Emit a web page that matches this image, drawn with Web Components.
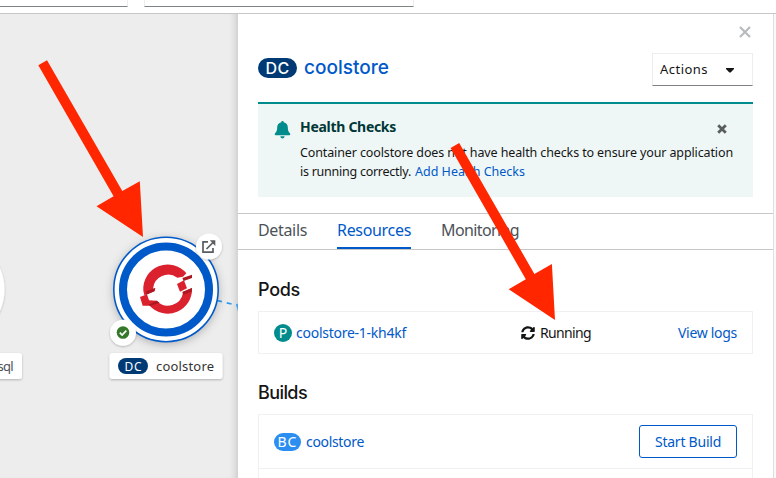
<!DOCTYPE html>
<html lang="en"><head><meta charset="utf-8"><title>coolstore</title>
<style>
html,body{margin:0;height:100%;overflow:hidden}
body{font-family:"Noto Sans","Liberation Sans",sans-serif;font-size:14px;color:#151515;background:#fff}
</style></head><body>
<console-app></console-app>
<script>
const define=(name,html,ready)=>customElements.define(name,class extends HTMLElement{
  connectedCallback(){
    if(this.shadowRoot)return;
    const t=document.createElement('template');t.innerHTML=html;
    this.attachShadow({mode:'open'}).append(t.content.cloneNode(true));
    if(ready)ready.call(this,this.shadowRoot);
  }
});

/* Text run tracked to a given width in pixels. */
define('fit-text',`<style>:host{display:inline-block;white-space:nowrap}span{display:inline-block}</style><span><slot></slot></span>`,function(r){
  const s=r.querySelector('span'),w=+this.getAttribute('w'),n=this.textContent.length;
  const d=(w-s.getBoundingClientRect().width)/n;
  s.style.letterSpacing=d+'px';this.style.width=w+'px';
});

define('kind-badge',`<style>:host{display:flex;align-items:center;justify-content:center;box-sizing:border-box;flex:none;color:#fff;background:var(--kind,#003a75);border-radius:20px;width:var(--w,18px);height:var(--h,18px);font-size:var(--fs,14px);line-height:1}</style><slot></slot>`);

define('top-bar',`<style>:host{display:flex;gap:16px;height:13px;border-bottom:1px solid #c7c7c7;background:#fff;flex:none}
i{height:6px;border-bottom:1px solid #808386;border-right:1px solid #ededed;width:127px}
.wide{width:268px;border-left:1px solid #ededed}</style><i></i><i class="wide"></i>`);

define('topology-view',`<style>:host{display:block;background:#ededed;width:238px;flex:none;box-shadow:inset -8px 0 8px -7px #0003}svg{display:block}text{font-family:"Noto Sans",sans-serif;font-size:13px}</style>
<svg width="238" height="464" viewBox="0 14 238 464">
<defs><filter id="s" x="-40%" y="-40%" width="180%" height="180%"><feDropShadow dx="0" dy="2" stdDeviation="5" flood-opacity=".28"/></filter>
<filter id="t" x="-30%" y="-30%" width="160%" height="180%"><feDropShadow dx="0" dy="1" stdDeviation="1.3" flood-opacity=".25"/></filter></defs>
<circle cx="-48.5" cy="289.5" r="53" fill="#fff" filter="url(#t)"/>
<rect x="-60" y="353" width="82" height="26" rx="3" fill="#fff" filter="url(#t)"/>
<text x="-2.5" y="371" textLength="16" fill="#4d5258">sql</text>
<path d="M217 300.500L238 305.500" stroke="#2b9af3" stroke-width="1.700" stroke-dasharray="5 5" fill="none"/>
<path d="M236 304.500l2-1v8z" fill="#4a9df0"/>
<circle cx="166" cy="289.500" r="52.500" fill="#fff" filter="url(#s)"/>
<circle cx="166" cy="289.500" r="52.200" fill="#fff" stroke="#0059c8" stroke-width="1.600"/>
<circle cx="166" cy="289.500" r="43" fill="#fff" stroke="#0059c8" stroke-width="8"/>
<g transform="translate(136 260) scale(.3333)"><g fill="#db212e">
<path d="M25 106L22 92A73 73 0 0 1 151 40L141 50L124 53A46 46 0 0 0 51 86L57 85L54 94Z"/>
<path d="M123 72L144 61L153 85L132 95Z"/>
<path d="M140 96L168 84A73 73 0 0 1 41 137L20 137L12 111L33 103L39 121L62 122A46 46 0 0 0 141 99Z"/></g>
<path d="M139 54L168 44V54L143 63ZM139 96L168 84L167 95L142 104ZM31 94L58 84L56 94L29 105ZM38 134L62 122L71 128L42 138Z" fill="#ad1820"/></g>
<g filter="url(#t)" fill="#fff"><circle cx="209" cy="246.500" r="13"/><circle cx="123" cy="332.700" r="13"/><rect x="109.500" y="353" width="113" height="26" rx="3"/></g>
<path d="M208 241.800H203V252.200H213V248M206.500 249L214 241.500" stroke="#5a5d60" stroke-width="1.700" fill="none"/><path d="M209.800 240.300H215.300V246z" fill="#5a5d60"/>
<circle cx="123" cy="332.500" r="6.300" fill="#35782a"/><path d="M119.800 332.700l2.300 2.300 4.200-4.300" stroke="#fff" stroke-width="1.700" fill="none"/>
<rect x="118" y="358" width="30" height="16" rx="8" fill="#003a75"/>
<text x="124.500" y="370.500" textLength="17" style="font-size:12px" fill="#fff">DC</text>
<text x="156" y="371" textLength="58" fill="#333">coolstore</text>
</svg>`);

define('actions-menu',`<style>:host{display:flex;align-items:center;box-sizing:border-box;width:101px;height:33px;border:1px solid #ededed;border-bottom-color:#808386;padding:0 18px 2px 7px;justify-content:space-between;font-size:13px;line-height:20px}svg{margin-top:3px}</style><slot></slot><svg width="8" height="5"><path d="M0 0H8V1L4.600 4.600H3.400L0 1Z" fill="#151515"/></svg>`);

define('inline-alert',`<style>:host{display:grid;grid-template-columns:26px minmax(0,1fr) 10px;box-sizing:border-box;height:95px;flex:none;border-top:2px solid #008c8c;background:#eff7f6;padding:13px 26px 0 16px}
.b{margin-top:4px}.x{margin-top:7px}.m{width:435px}</style>
<svg class="b" width="17" height="18" viewBox="0 0 17 18"><path d="M8.500 0c.7 0 1.200.5 1.200 1.200 2.600.6 4.100 2.600 4.100 5.100 0 3.300.8 4.700 2.100 6 .8.800.4 2-.7 2H1.800c-1.100 0-1.500-1.200-.7-2 1.300-1.300 2.100-2.700 2.100-6 0-2.500 1.500-4.500 4.100-5.100C7.300.5 7.800 0 8.500 0zM6.400 15.300h4.200c0 1.300-.9 2.200-2.100 2.200s-2.100-.9-2.100-2.200z" fill="#008c8c"/></svg>
<div class="m"><slot></slot></div>
<svg class="x" width="10" height="10"><path d="M1.200 1.200L8.800 8.800M8.800 1.200L1.200 8.800" stroke="#5a5d60" stroke-width="2.800"/></svg>`);

define('tab-bar',`<style>:host{display:flex;gap:30px;box-sizing:border-box;height:37px;border:solid #c7c7c7;border-width:1px 0;padding:0 20px;font-size:16px;line-height:33px;color:#4d5258}
::slotted(*){height:35px}::slotted([on]){color:#0059c8;box-shadow:inset 0 -2px #0059c8}</style><slot></slot>`);

define('section-title',`<style>:host{display:block;font:500 18px/24px Inter,sans-serif;color:#151515;height:24px;flex:none}</style><slot></slot>`);

define('resource-row',`<style>:host{display:flex;align-items:center;box-sizing:border-box;height:var(--rh,43px);flex:none;border:1px solid #f0f0f0;padding:0 15px;line-height:20px}
.l{display:flex;gap:var(--g,4px);align-items:center;width:var(--lw,247px)}.m{display:flex;gap:5px;align-items:center;flex:1}</style>
<div class="l"><slot name="name"></slot></div><div class="m"><slot name="status"></slot></div><slot></slot>`);

define('sync-icon',`<style>:host{display:block;width:14px;height:14px}svg{display:block}</style><svg width="14" height="14" viewBox="0 0 512 512"><path fill="#151515" d="M370.700 133.300C339.500 104 298.900 88 255.800 88c-77.500.1-144.300 53.200-162.800 126.900-1.300 5.400-6.100 9.100-11.700 9.100H24.100c-7.500 0-13.200-6.800-11.800-14.200C33.900 94.900 134.800 8 256 8c66.400 0 126.800 26.100 171.300 68.700L463 41c15.100-15.100 41-4.400 41 17v134c0 13.300-10.700 24-24 24H346c-21.400 0-32.100-25.900-17-41zM32 296h134c21.400 0 32.100 25.900 17 41l-41.800 41.800c31.300 29.300 71.800 45.300 114.900 45.300 77.400-.1 144.300-53.100 162.800-126.800 1.300-5.400 6.100-9.100 11.700-9.100h57.300c7.500 0 13.200 6.800 11.800 14.200C478.100 417.100 377.200 504 256 504c-66.400 0-126.800-26.100-171.300-68.700L49 471c-15.100 15.100-41 4.400-41-17V320c0-13.300 10.700-24 24-24z"/></svg>`);

define('outline-button',`<style>:host{display:flex;box-sizing:border-box;width:98px;height:33px;align-items:center;justify-content:center;border:1px solid #0059c8;border-radius:3px;color:#0059c8}</style><slot></slot>`);

define('side-panel',`<style>:host{display:flex;flex-direction:column;box-sizing:border-box;width:536px;border-right:1px solid #dedede;background:#fff;flex:none;overflow:hidden}
a{color:#0059c8}.in{margin:0 20px}
.close{align-self:flex-end;margin:12px 22.500px 1px 0;height:12px;flex:none}
header{display:flex;justify-content:space-between;height:33px;margin:14px 20px 16px;flex:none}
.t{display:flex;gap:7px;height:30px;align-items:center;font:500 19px/28px Inter,sans-serif;color:#0059c8}
.p{font-size:12.500px;line-height:19px;display:block}
.h{font:700 14px/20px "Noto Sans",sans-serif;color:#003737;display:block;height:26px}
tab-bar{margin:16px 0 28px;flex:none}
.pods{margin-top:9px;margin-bottom:27px}.builds{margin-top:9px;--rh:55px;--g:5px}.next{--rh:54px;margin-top:-1px}
.name{--kind:#008c8c}.bc{--kind:#2b8ef0;--w:27px}
</style>
<svg class="close" width="12" height="12"><path d="M1 1L11 11M11 1L1 11" stroke="#b8bbbe" stroke-width="2.200"/></svg>
<header><div class="t"><kind-badge style="--w:39px;--h:20px;--fs:16px"><fit-text w="24">DC</fit-text></kind-badge><fit-text w="85">coolstore</fit-text></div>
<actions-menu><fit-text w="48">Actions</fit-text></actions-menu></header>
<inline-alert class="in"><fit-text class="h" w="96">Health Checks</fit-text><fit-text class="p" w="433">Container coolstore does not have health checks to ensure your application</fit-text><div class="p"><fit-text w="111">is running correctly.</fit-text><a style="margin-left:4px"><fit-text w="110">Add Health Checks</fit-text></a></div></inline-alert>
<tab-bar><fit-text w="49">Details</fit-text><fit-text w="74" on>Resources</fit-text><fit-text w="78">Monitoring</fit-text></tab-bar>
<section-title class="in"><fit-text w="42">Pods</fit-text></section-title>
<resource-row class="in pods"><kind-badge slot="name" class="name">P</kind-badge><a slot="name"><fit-text w="110">coolstore-1-kh4kf</fit-text></a><sync-icon slot="status"></sync-icon><fit-text slot="status" w="51">Running</fit-text><a><fit-text w="59">View logs</fit-text></a></resource-row>
<section-title class="in"><fit-text w="49">Builds</fit-text></section-title>
<resource-row class="in builds"><kind-badge slot="name" class="bc"><fit-text w="20">BC</fit-text></kind-badge><a slot="name"><fit-text w="58">coolstore</fit-text></a><outline-button><fit-text w="66">Start Build</fit-text></outline-button></resource-row>
<resource-row class="in next"></resource-row>`);

define('pointer-arrows',`<style>:host{position:absolute;inset:0;pointer-events:none}svg{display:block}</style>
<svg width="776" height="478" fill="#ff2600"><path d="M38.300 65.300L47 60.200L122.300 191L139.800 181.300L143 237L96.500 206.300L113.600 196.300Z"/><path d="M450.600 148L459.200 143L534.400 274L551.900 264L555 320L508.700 289.300L525.800 279.300Z"/></svg>`);

define('console-app',`<style>:host{display:flex;flex-direction:column;width:776px;height:478px;overflow:hidden;position:relative}main{display:flex;height:464px;background:#fafafa}</style>
<top-bar></top-bar><main><topology-view></topology-view><side-panel></side-panel></main><pointer-arrows></pointer-arrows>`);
</script></body></html>
